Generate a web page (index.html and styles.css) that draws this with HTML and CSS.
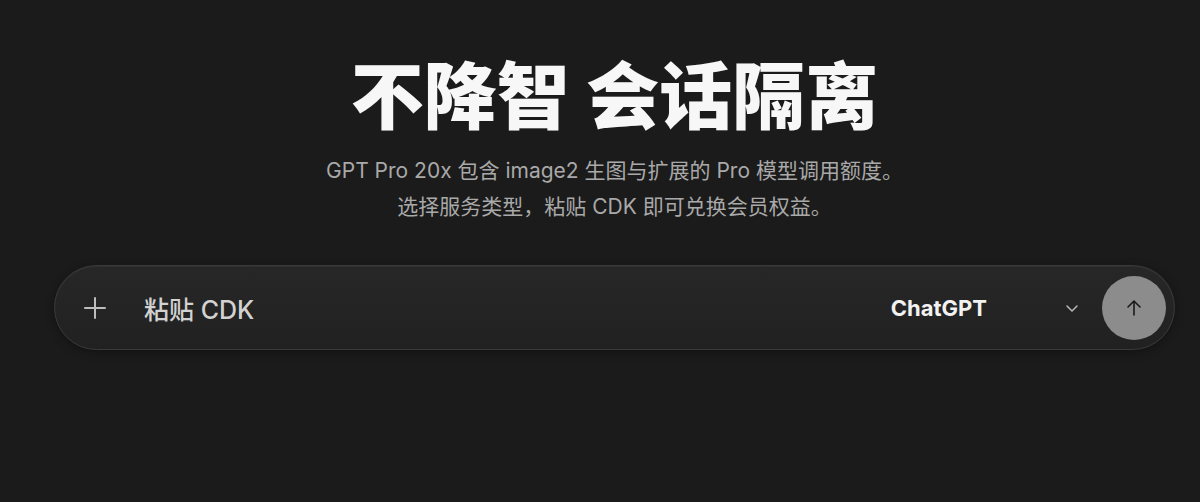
FILE: index.html
```html
<!DOCTYPE html>
<html lang="zh-CN">
<head>
<meta charset="utf-8">
<title>不降智 会话隔离</title>
<link rel="stylesheet" href="styles.css">
</head>
<body>
<main class="page">
  <h1 class="title">不降智 会话隔离</h1>
  <p class="subtitle">GPT Pro 20x 包含 image2 生图与扩展的 Pro 模型调用额度。<br>选择服务类型，粘贴 CDK 即可兑换会员权益。</p>
  <div class="bar">
    <button class="plus" aria-label="add">
      <svg width="26" height="26" viewBox="0 0 26 26"><path d="M13 3v20M3 13h20" stroke="#bdbdbd" stroke-width="2" stroke-linecap="round" fill="none"/></svg>
    </button>
    <span class="placeholder">粘贴 CDK</span>
    <span class="service">ChatGPT</span>
    <svg class="chev" width="18" height="18" viewBox="0 0 18 18"><path d="M4 7l5 5 5-5" stroke="#b8b8b8" stroke-width="1.5" stroke-linecap="round" stroke-linejoin="round" fill="none"/></svg>
    <button class="send" aria-label="send">
      <svg width="20" height="20" viewBox="0 0 20 20"><path d="M10 17V3M4 9l6-6 6 6" stroke="#1a1a1a" stroke-width="1.6" stroke-linecap="round" stroke-linejoin="round" fill="none"/></svg>
    </button>
  </div>
</main>
</body>
</html>
```
FILE: styles.css
```css
html, body {
  margin: 0;
  padding: 0;
  background: #1b1b1b;
  height: 100%;
}
body {
  font-family: "Inter", "Noto Sans CJK SC", sans-serif;
  color: #fff;
}
.page {
  display: flex;
  flex-direction: column;
  align-items: center;
  padding: 46px 25px 0 54px;
}
.title {
  margin: 0;
  font-family: "Noto Sans CJK SC", sans-serif;
  font-weight: 900;
  font-size: 73px;
  line-height: 90px;
  letter-spacing: 0;
  color: #f7f7f7;
}
.subtitle {
  margin: 17px 0 0;
  text-align: center;
  font-size: 21px;
  line-height: 36px;
  color: #a9a9a9;
  font-family: "Inter", "Noto Sans CJK SC", sans-serif;
}
.bar {
  margin-top: 40px;
  align-self: stretch;
  height: 85px;
  box-sizing: border-box;
  border-radius: 43px;
  border: 1px solid #3a3a3a;
  background: linear-gradient(180deg, #272727 0%, #212121 100%);
  box-shadow: 0 2px 10px rgba(0,0,0,0.35), inset 0 1px 0 rgba(255,255,255,0.04);
  display: flex;
  align-items: center;
  padding: 0 8px 0 27px;
}
.plus, .send {
  border: none;
  padding: 0;
  background: none;
  display: flex;
  align-items: center;
  justify-content: center;
}
.plus {
  width: 26px;
  height: 26px;
}
.placeholder {
  margin-left: 36px;
  font-size: 25px;
  color: #d2d2d2;
  font-weight: 500;
  flex: 1;
}
.service {
  font-size: 22px;
  font-weight: 700;
  color: #f2f2f2;
}
.chev {
  margin-left: 76px;
}
.send {
  margin-left: 21px;
  width: 64px;
  height: 64px;
  border-radius: 50%;
  background: #8c8c8c;
}
```
